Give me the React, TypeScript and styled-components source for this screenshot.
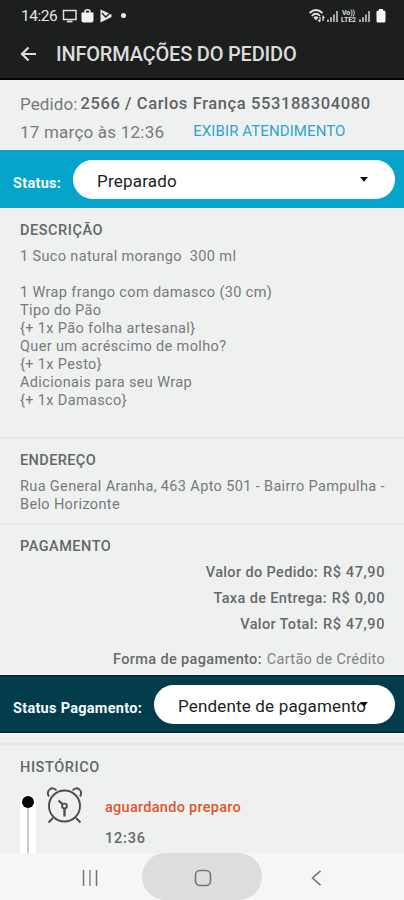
import React from 'react';
import styled, { createGlobalStyle } from 'styled-components';

const Global = createGlobalStyle`
  * { box-sizing: border-box; }
  body { margin: 0; background: #eff1f1; font-family: Roboto, "Liberation Sans", sans-serif; }
`;

const Screen = styled.div`
  width: 404px;
  height: 900px;
  overflow: hidden;
  display: flex;
  flex-direction: column;
  background: #eff1f1;
  color: #77797b;
`;

const StatusBar = styled.div`
  height: 32px;
  padding: 0 18px 0 21px;
  display: flex;
  align-items: center;
  justify-content: space-between;
  background: #1d1f1e;
  color: #e6e6e6;
`;

const Clock = styled.span`
  width: 41px;
  font-size: 15.5px;
  line-height: 32px;
  letter-spacing: -0.5px;
  white-space: nowrap;
`;

const StatusGroup = styled.div`
  display: flex;
  align-items: center;
`;

const AppBar = styled.header`
  height: 48px;
  padding: 0 20px;
  display: flex;
  align-items: center;
  gap: 19px;
  background: #1d1f1e;
  border-bottom: 2px solid #050505;
  color: #dcdcdc;
`;

const Title = styled.h1`
  margin: 0;
  padding-bottom: 2px;
  font-size: 20px;
  font-weight: 500;
  line-height: 24px;
  letter-spacing: -0.2px;
  white-space: nowrap;
`;

const Summary = styled.section`
  height: 70px;
  padding: 12px 20px 0;
  white-space: nowrap;
`;

const SummaryRow = styled.div<{ $gap: number; $h: number }>`
  display: flex;
  align-items: center;
  gap: ${p => p.$gap}px;
  height: ${p => p.$h}px;
`;

const Lead = styled.span<{ $spacing: number }>`
  font-size: 17px;
  line-height: 24px;
  letter-spacing: ${p => p.$spacing}px;
`;

const OrderId = styled.strong`
  font-size: 16.5px;
  font-weight: 500;
  line-height: 24px;
  letter-spacing: 0.6px;
  color: #606264;
`;

const ChatLink = styled.a`
  padding-bottom: 2px;
  font-size: 15px;
  line-height: 20px;
  letter-spacing: 0.1px;
  color: #2fa3cd;
`;

const SelectBar = styled.section<{ $bg: string; $edge: string }>`
  height: 58px;
  flex: none;
  padding: 0 9px 0 13px;
  display: flex;
  align-items: center;
  justify-content: space-between;
  background: ${p => p.$bg};
  border-top: 1px solid ${p => p.$edge};
  border-bottom: 1px solid ${p => p.$edge};
  box-shadow: 0 -1px 0 #fafcfc, 0 1px 0 #fafcfc;
`;

const SelectLabel = styled.label<{ $spacing: number }>`
  padding-top: 8px;
  font-size: 14.5px;
  font-weight: 700;
  letter-spacing: ${p => p.$spacing}px;
  color: #f5fbfd;
  white-space: nowrap;
`;

const Select = styled.div<{ $w: number; $spacing: number }>`
  width: ${p => p.$w}px;
  height: 39px;
  padding: 3px 27px 0 24px;
  display: flex;
  align-items: center;
  justify-content: space-between;
  border-radius: 20px;
  background: #fff;
  color: #222;
  font-size: 17px;
  letter-spacing: ${p => p.$spacing}px;
  white-space: nowrap;
`;

const Caret = styled.svg<{ $overlap?: boolean }>`
  flex: none;
  margin: 0 0 2px ${p => (p.$overlap ? -8 : 0)}px;
`;

const Section = styled.section<{ $h: number; $top: number; $line?: boolean }>`
  height: ${p => p.$h}px;
  flex: none;
  padding: ${p => p.$top}px 19px 0 20px;
  border-bottom: ${p => (p.$line ? '2px solid #e8eaea' : '0')};
`;

const Heading = styled.h2<{ $spacing: number }>`
  margin: 0;
  font-size: 14.5px;
  font-weight: 500;
  line-height: 20px;
  letter-spacing: ${p => p.$spacing}px;
  color: #626866;
`;

const Line = styled.p`
  margin: 0;
  height: 18px;
  font-size: 14.5px;
  line-height: 18px;
  letter-spacing: 0.36px;
  white-space: pre;
`;

const Body = styled.div<{ $top: number }>`
  padding-top: ${p => p.$top}px;
`;

const Amount = styled.div<{ $h?: number }>`
  height: ${p => p.$h ?? 26}px;
  display: flex;
  align-items: flex-end;
  justify-content: flex-end;
  gap: 5px;
  font-size: 14.5px;
  line-height: 26px;
  font-weight: 500;
  letter-spacing: 0.36px;
  color: #67696c;
`;

const Value = styled.span`
  letter-spacing: 0.6px;
`;

const Method = styled.span`
  font-weight: 400;
  letter-spacing: 0.3px;
  color: #808285;
`;

const Timeline = styled.div`
  display: flex;
  height: 75px;
`;

const Track = styled.div`
  width: 16px;
  margin-top: 18px;
  height: 57px;
  display: flex;
  flex-direction: column;
  align-items: center;
  background: #fff;
  border-radius: 6px 6px 0 0;
`;

const Dot = styled.i`
  width: 12px;
  height: 12px;
  flex: none;
  border-radius: 50%;
  background: #050505;
`;

const Rail = styled.i`
  width: 2px;
  flex: 1;
  background: #c9cbcb;
`;

const AlarmIcon = styled.svg`
  margin: 7px 0 0 9px;
  flex: none;
`;

const Event = styled.div`
  margin: 20px 0 0 20px;
  display: flex;
  flex-direction: column;
  gap: 11px;
  font-size: 14.5px;
  line-height: 20px;
  font-weight: 500;
`;

const EventName = styled.span`
  letter-spacing: 0.28px;
  color: #df552f;
`;

const EventTime = styled.time`
  letter-spacing: 0.8px;
  color: #66696a;
`;

const NavBar = styled.nav`
  height: 47px;
  flex: none;
  display: grid;
  grid-template-columns: 142px 120px 142px;
  background: #f6f6f6;
`;

const NavButton = styled.button<{ $active?: boolean; $left?: number; $right?: number }>`
  border: 0;
  padding: 3px ${p => p.$right ?? 0}px 0 ${p => p.$left ?? 0}px;
  display: flex;
  align-items: center;
  justify-content: center;
  background: ${p => (p.$active ? '#dddddd' : 'transparent')};
  border-radius: ${p => (p.$active ? '24px' : '0')};
`;

const StatusIconsLeft = () => (
  <svg width="66" height="16" viewBox="0 0 66 16" fill="none">
    <path d="M1.500 2.500h12.500v9h-12.500z" stroke="#dedede" strokeWidth="1.500" />
    <path d="M5 13.500h5.500" stroke="#dedede" strokeWidth="1.800" />
    <path d="M19.500 4.500h12v8q0 2-2 2h-8q-2 0-2-2z" fill="#f2f2f2" />
    <path d="M23 6V3.800q0-2 2.500-2t2.500 2V6" stroke="#f2f2f2" strokeWidth="1.500" />
    <path d="M38.500 1.500l11 5v2.500l-11 5.500z" fill="#e8e8e8" />
    <path d="M40 5l3.700 4 5.500-5" stroke="#1d1f1e" strokeWidth="1.300" />
    <circle cx="61.500" cy="7.500" r="2.500" fill="#f0f0f0" />
  </svg>
);

const Signal = ({ x }: { x: number }) => (
  <path d={`M${x + 1} 14v-2.500M${x + 4} 14V9M${x + 7} 14V6.500M${x + 10} 14V3`} stroke="#bdbdbd" strokeWidth="1.700" />
);

const Tiny = styled.text`
  font: 700 7px Roboto, "Liberation Sans", sans-serif;
  fill: #dedede;
`;

const StatusIconsRight = () => (
  <svg width="78" height="16" viewBox="0 0 78 16" fill="none">
    <path d="M1.500 5Q8-1 14.500 5M3.800 7.800Q8 3.800 12 7.800" stroke="#e0e0e0" strokeWidth="1.800" />
    <path d="M5.300 9.300Q8 7.300 10.500 9.300L8 12.500z" fill="#e0e0e0" />
    <path d="M12 9v4.500M10.300 12l1.700 1.800M15 13V8.500l1.500 1.500" stroke="#e0e0e0" strokeWidth="1.200" />
    <Signal x={19} />
    <Tiny x="34" y="7" textLength="13">Vo))</Tiny>
    <Tiny x="33" y="14" textLength="15" lengthAdjust="spacingAndGlyphs">LTE2</Tiny>
    <Signal x={51} />
    <path d="M71 2.500v-1.500h4v1.500h1q1.500 0 1.500 1.500v9q0 1.500-1.500 1.500h-6q-1.500 0-1.500-1.500V4q0-1.500 1.500-1.500z" fill="#fafafa" />
  </svg>
);

const CaretIcon = ({ overlap }: { overlap?: boolean }) => (
  <Caret $overlap={overlap} width="8" height="5" viewBox="0 0 8 5">
    <path d="M0 0h8L4 4.800z" fill="#111" />
  </Caret>
);

const description = [
  '1 Suco natural morango  300 ml',
  '',
  '1 Wrap frango com damasco (30 cm)',
  'Tipo do Pão',
  '{+ 1x Pão folha artesanal}',
  'Quer um acréscimo de molho?',
  '{+ 1x Pesto}',
  'Adicionais para seu Wrap',
  '{+ 1x Damasco}',
];

const amounts = [
  ['Valor do Pedido:', 'R$ 47,90'],
  ['Taxa de Entrega:', 'R$ 0,00'],
  ['Valor Total:', 'R$ 47,90'],
];

export default function App() {
  return (
    <>
      <Global />
      <Screen>
        <StatusBar>
          <StatusGroup>
            <Clock>14:26</Clock>
            <StatusIconsLeft />
          </StatusGroup>
          <StatusIconsRight />
        </StatusBar>
        <AppBar>
          <svg width="17" height="16" viewBox="0 0 17 16" fill="none" stroke="#dedede" strokeWidth="2.200">
            <path d="M16 7H2M8.500 0.500L2 7l6.500 6.500" />
          </svg>
          <Title>INFORMAÇÕES DO PEDIDO</Title>
        </AppBar>
        <Summary>
          <SummaryRow $gap={3} $h={24}>
            <Lead $spacing={0.1}>Pedido:</Lead>
            <OrderId>2566 / Carlos França 553188304080</OrderId>
          </SummaryRow>
          <SummaryRow $gap={29} $h={32}>
            <Lead $spacing={0.22}>17 março às 12:36</Lead>
            <ChatLink>EXIBIR ATENDIMENTO</ChatLink>
          </SummaryRow>
        </Summary>
        <SelectBar $bg="#06a3cb" $edge="#06a3cb">
          <SelectLabel $spacing={0.3}>Status:</SelectLabel>
          <Select $w={322} $spacing={0.2}>
            Preparado
            <CaretIcon />
          </Select>
        </SelectBar>
        <Section $h={231} $top={13} $line>
          <Heading $spacing={0.55}>DESCRIÇÃO</Heading>
          <Body $top={7}>
            {description.map((text, i) => (
              <Line key={i}>{text}</Line>
            ))}
          </Body>
        </Section>
        <Section $h={86} $top={12} $line>
          <Heading $spacing={0.4}>ENDEREÇO</Heading>
          <Body $top={7}>
            <Line>Rua General Aranha, 463 Apto 501 - Bairro Pampulha -</Line>
            <Line>Belo Horizonte</Line>
          </Body>
        </Section>
        <Section $h={150} $top={12}>
          <Heading $spacing={0.5}>PAGAMENTO</Heading>
          <Body $top={3}>
            {amounts.map(([name, value]) => (
              <Amount key={name}>
                <span>{name}</span>
                <Value>{value}</Value>
              </Amount>
            ))}
            <Amount $h={35}>
              <span>Forma de pagamento:</span>
              <Method>Cartão de Crédito</Method>
            </Amount>
          </Body>
        </Section>
        <SelectBar $bg="#033d4b" $edge="#061a30">
          <SelectLabel $spacing={0.28}>Status Pagamento:</SelectLabel>
          <Select $w={241} $spacing={0.17}>
            Pendente de pagamento
            <CaretIcon overlap />
          </Select>
        </SelectBar>
        <Section $h={12} $top={0} $line />
        <Section $h={108} $top={13}>
          <Heading $spacing={0.6}>HISTÓRICO</Heading>
          <Timeline>
            <Track>
              <Dot />
              <Rail />
            </Track>
            <AlarmIcon width="40" height="40" viewBox="0 0 40 40" fill="none" stroke="#4c4e4e" strokeWidth="1.900">
              <circle cx="19.500" cy="21" r="15.500" />
              <path d="M4 11.500C0.500 6 7 0 11.500 5.500M35 11.500C38.500 6 32 0 27.500 5.500M8 33l-4.500 4.500M31 33l4.500 4.500" />
              <circle cx="19.500" cy="21" r="2.400" />
              <path d="M18 19.500l-4.500-4M19.500 23.500v8" strokeWidth="2.300" />
            </AlarmIcon>
            <Event>
              <EventName>aguardando preparo</EventName>
              <EventTime>12:36</EventTime>
            </Event>
          </Timeline>
        </Section>
        <NavBar>
          <NavButton $left={38} aria-label="Recentes">
            <svg width="16" height="16" viewBox="0 0 16 16" stroke="#727272" strokeWidth="1.500">
              <path d="M1.500 0v16M14.500 0v16" />
              <path d="M8 0v16" stroke="#a8a8a8" strokeWidth="2" />
            </svg>
          </NavButton>
          <NavButton $active $left={2} aria-label="Início">
            <svg width="18" height="18" viewBox="0 0 18 18" fill="none" stroke="#747474" strokeWidth="1.600">
              <rect x="1.500" y="1.500" width="15" height="15" rx="4.500" />
            </svg>
          </NavButton>
          <NavButton $right={33} aria-label="Voltar">
            <svg width="11" height="16" viewBox="0 0 11 16" fill="none" stroke="#747474" strokeWidth="1.600">
              <path d="M9.500 0.800L1.500 8l8 7.200" />
            </svg>
          </NavButton>
        </NavBar>
      </Screen>
    </>
  );
}
